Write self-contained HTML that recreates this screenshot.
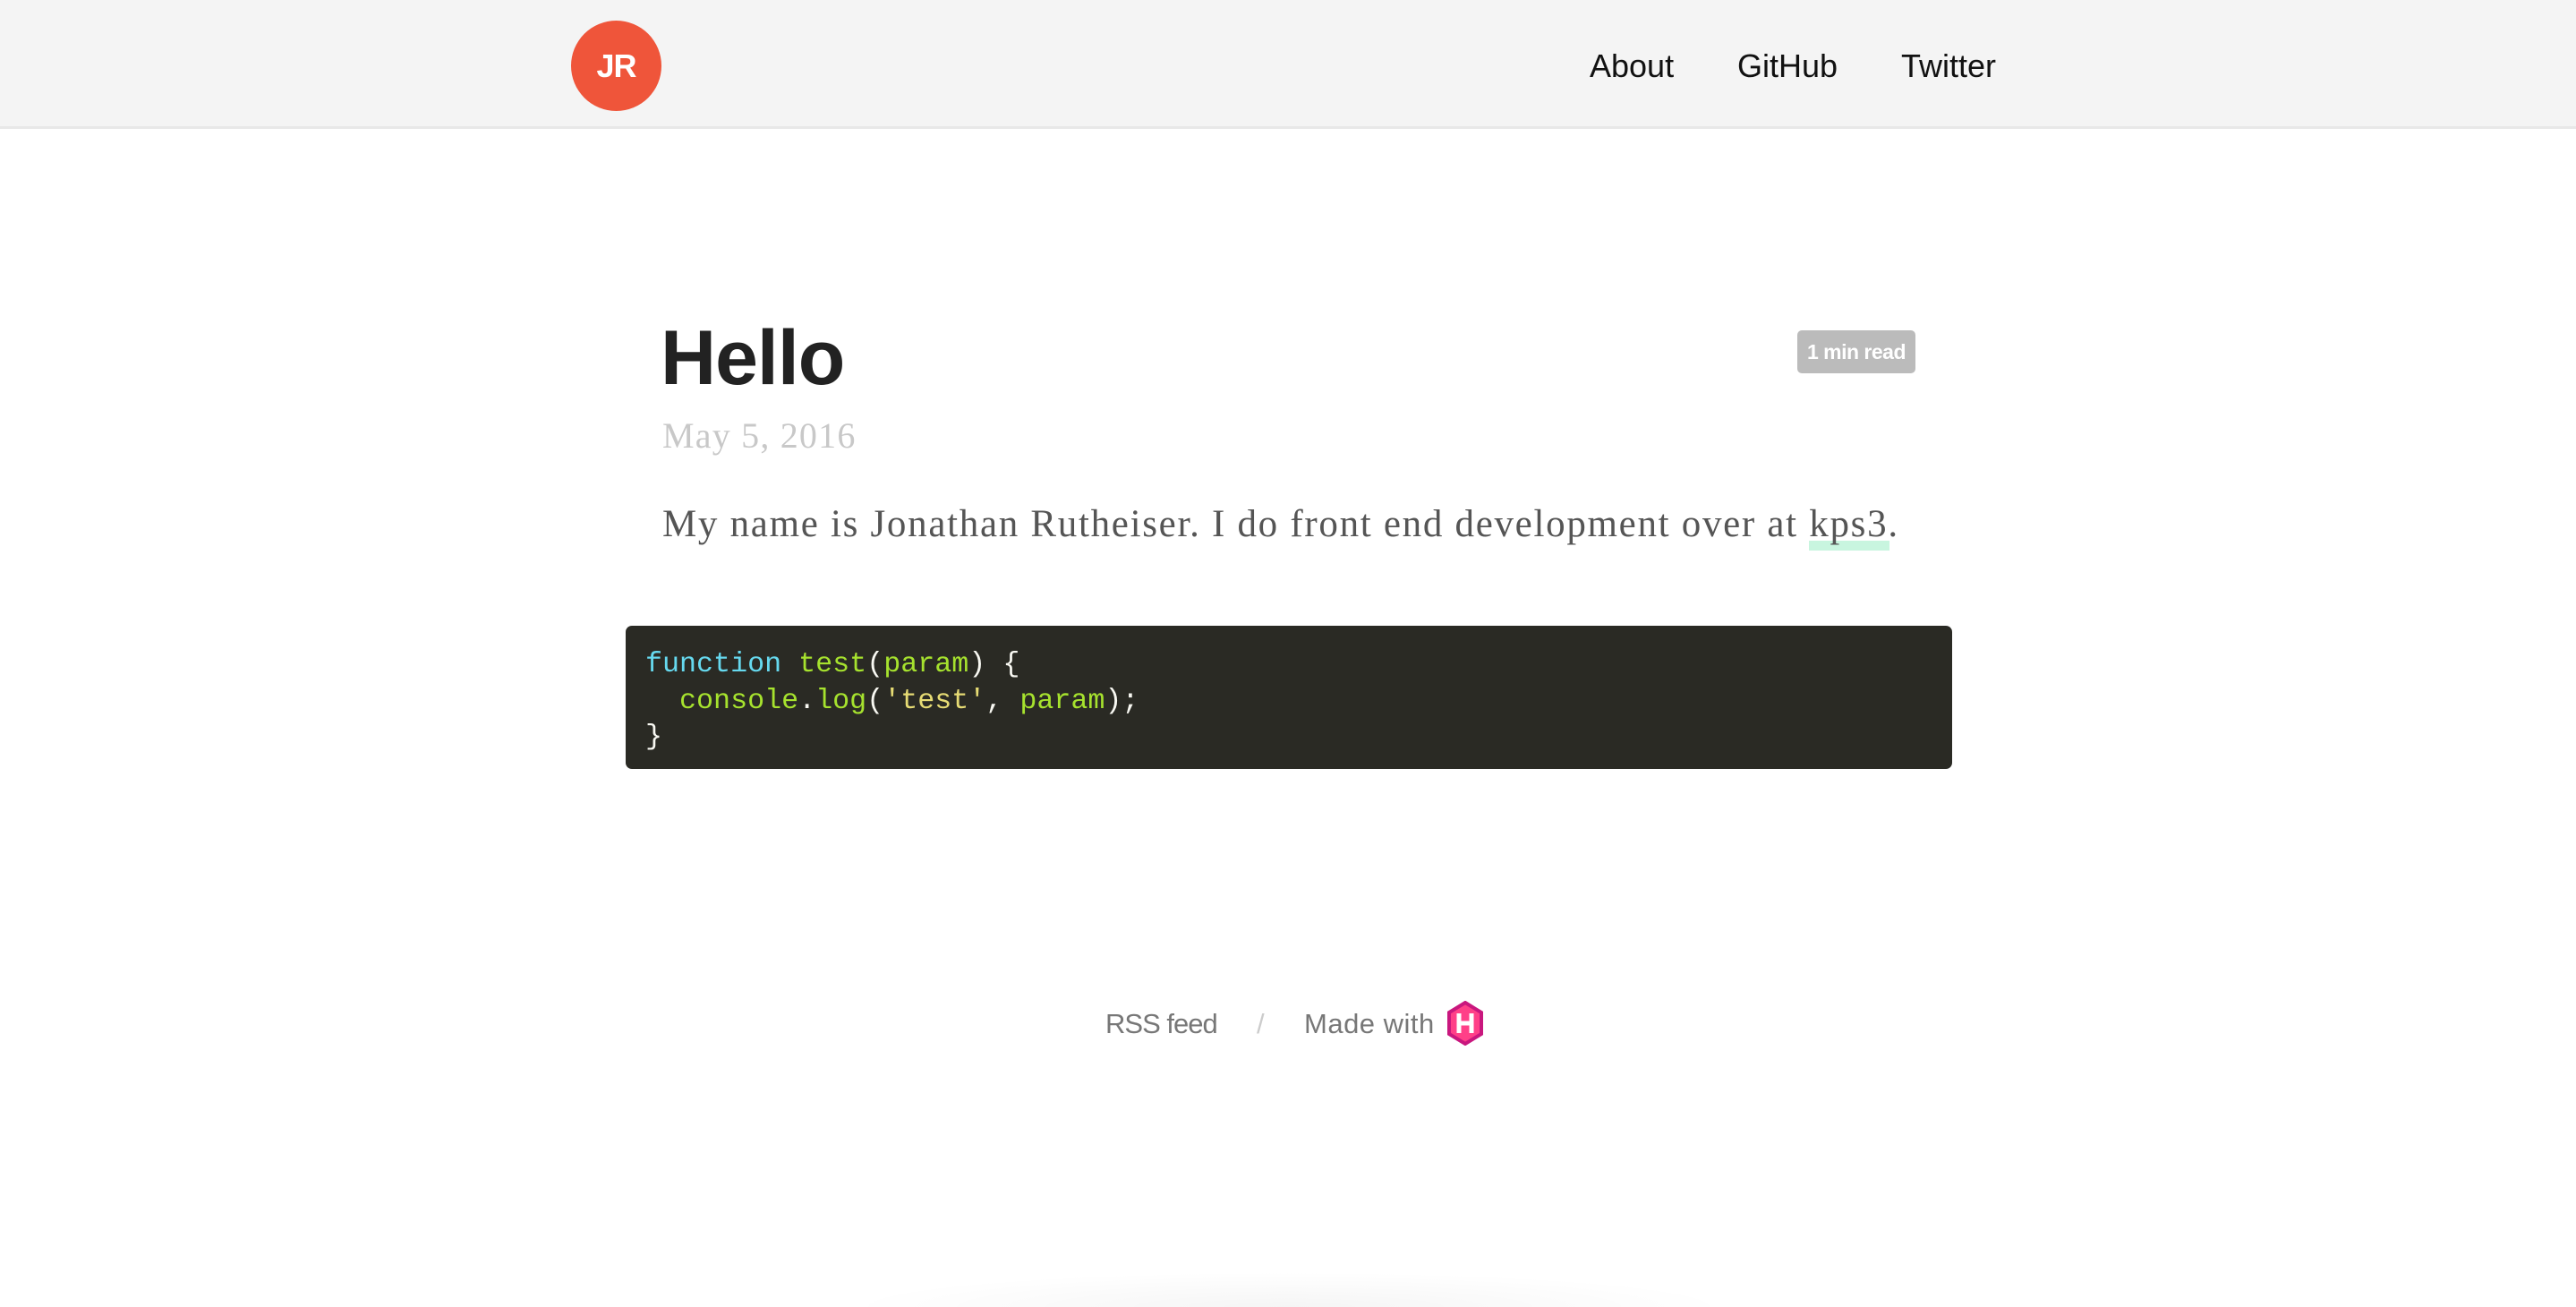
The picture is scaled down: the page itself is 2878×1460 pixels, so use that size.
<!DOCTYPE html>
<html><head><meta charset="utf-8"><style>
*{margin:0;padding:0;box-sizing:border-box}
body{width:2878px;height:1452px;background:#fff;position:relative;overflow:hidden;font-family:"Liberation Sans",sans-serif}
.hdr{position:absolute;left:0;top:0;width:2878px;height:144px;background:#f4f4f4;border-bottom:3px solid #e8e8e8}
.logo{position:absolute;left:638px;top:23px;width:101px;height:101px;border-radius:50%;background:#ef553a;color:#fff;font-weight:bold;font-size:36px;text-align:center;line-height:101px;letter-spacing:-1px}
.nav{position:absolute;top:52px;font-size:36px;color:#111;line-height:44px}
.abs{position:absolute;white-space:nowrap}
h1{position:absolute;left:738px;top:350px;font-size:86px;font-weight:bold;color:#222;line-height:100px;letter-spacing:-1px}
.badge{position:absolute;left:2008px;top:369px;width:132px;height:48px;background:#bbb;border-radius:5px;color:#fff;font-weight:bold;font-size:23px;line-height:48px;text-align:center;letter-spacing:-0.5px}
.serif{font-family:"Liberation Serif",serif}
.code{position:absolute;left:699px;top:699px;width:1482px;height:160px;background:#2a2a24;border-radius:7px;font-family:"Liberation Mono",monospace;font-size:31.7px;line-height:40.5px;color:#f8f8f2;padding:23px 22px;white-space:pre}
.b{color:#66d9ef}.g{color:#a6e22e}.y{color:#e6db74}
.ft{font-size:31px;color:#777;top:1122px;line-height:44px}
</style></head><body>
<div class="hdr">
<div class="logo">JR</div>
<div class="nav abs" style="left:1776px">About</div>
<div class="nav abs" style="left:1941px">GitHub</div>
<div class="nav abs" style="left:2124px">Twitter</div>
</div>
<h1>Hello</h1>
<div class="badge">1 min read</div>
<div class="abs serif" style="left:740px;top:463px;font-size:40px;color:#c8c8c8;line-height:48px;letter-spacing:1.2px">May 5, 2016</div>
<div class="abs" style="left:2021px;top:604px;width:90px;height:11px;background:#c8f5df"></div>
<div class="abs serif" style="left:740px;top:560px;font-size:43px;color:#555;line-height:52px;letter-spacing:1.7px">My name is Jonathan Rutheiser. I do front end development over at kps3.</div>
<div class="code"><span class="b">function</span> <span class="g">test</span>(<span class="g">param</span>) {
  <span class="g">console</span>.<span class="g">log</span>(<span class="y">'test'</span>, <span class="g">param</span>);
}</div>
<div class="abs ft" style="left:1235px;letter-spacing:-1px">RSS feed</div>
<div class="abs ft" style="left:1404px;color:#ccc">/</div>
<div class="abs ft" style="left:1457px;letter-spacing:0.5px">Made with</div>
<svg class="abs" style="left:1616px;top:1118px" width="42" height="50" viewBox="0 0 42 50">
<polygon points="21,2 39,13 39,37 21,48 3,37 3,13" fill="#ff4088" stroke="#c9177e" stroke-width="4"/>
<path d="M14 14v22M28 14v22M14 25h14" stroke="#fff" stroke-width="5" fill="none"/>
</svg>
<div class="abs" style="left:940px;top:1420px;width:1000px;height:40px;background:radial-gradient(ellipse at center bottom,rgba(0,0,0,0.04),rgba(0,0,0,0) 70%)"></div>
</body></html>
